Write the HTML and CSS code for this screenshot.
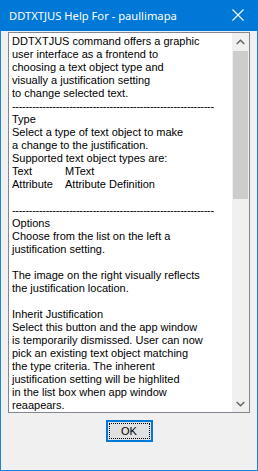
FILE: index.html
```html
<!DOCTYPE html>
<html>

<head>
    <title>DDTXTJUS Help For - paullimapa</title>
    <link rel="stylesheet" href="styles.css">
</head>

<body>
    <div class="window">
        <div class="titlebar">
            <span class="title">DDTXTJUS Help For - paullimapa</span>
            <span class="close">
                <svg width="12" height="12" viewBox="0 0 12 12">
                    <path d="M0.5 0.5 L11.5 11.5 M11.5 0.5 L0.5 11.5" stroke="#fff" stroke-width="1.1" fill="none"/>
                </svg>
            </span>
        </div>
        <div class="client">
            <div class="textbox">
                <div class="text">
                    <div>DDTXTJUS command offers a graphic</div>
                    <div>user interface as a frontend to</div>
                    <div>choosing a text object type and</div>
                    <div>visually a justification setting</div>
                    <div>to change selected text.</div>
                    <div class="dashes">------------------------------------------------------------</div>
                    <div>Type</div>
                    <div>Select a type of text object to make</div>
                    <div>a change to the justification.</div>
                    <div>Supported text object types are:</div>
                    <div><span class="col">Text</span>MText</div>
                    <div><span class="col">Attribute</span>Attribute Definition</div>
                    <div>&nbsp;</div>
                    <div class="dashes">------------------------------------------------------------</div>
                    <div>Options</div>
                    <div>Choose from the list on the left a</div>
                    <div>justification setting.</div>
                    <div>&nbsp;</div>
                    <div>The image on the right visually reflects</div>
                    <div>the justification location.</div>
                    <div>&nbsp;</div>
                    <div>Inherit Justification</div>
                    <div>Select this button and the app window</div>
                    <div>is temporarily dismissed. User can now</div>
                    <div>pick an existing text object matching</div>
                    <div>the type criteria. The inherent</div>
                    <div>justification setting will be highlited</div>
                    <div>in the list box when app window</div>
                    <div>reaapears.</div>
                </div>
                <div class="scrollbar">
                    <div class="arrow">
                        <svg width="9" height="6" viewBox="0 0 9 6">
                            <path d="M0.7 5 L4.5 1.2 L8.3 5" stroke="#606060" stroke-width="1.4" fill="none"/>
                        </svg>
                    </div>
                    <div class="track">
                        <div class="thumb"></div>
                    </div>
                    <div class="arrow">
                        <svg width="9" height="6" viewBox="0 0 9 6">
                            <path d="M0.7 1 L4.5 4.8 L8.3 1" stroke="#606060" stroke-width="1.4" fill="none"/>
                        </svg>
                    </div>
                </div>
            </div>
            <div class="actions">
                <button type="button" class="ok"><span class="focus">OK</span></button>
            </div>
        </div>
    </div>
</body>

</html>
```

FILE: styles.css
```css
body{
    margin: 0;
}

.window{
    width: 258px;
    height: 471px;
    box-sizing: border-box;
    border: 1px solid #1883d7;
    border-top: none;
    display: flex;
    flex-direction: column;
    background-color: #f0f0f0;
}

.titlebar{
    height: 31px;
    margin: 0 -1px;
    background-color: #0078d7;
    display: flex;
    align-items: center;
    padding: 0 0 1px 9px;
    box-sizing: border-box;
}

.title{
    flex: 1;
    color: #fff;
    font-family: "Noto Sans", sans-serif;
    font-size: 11.2px;
    white-space: nowrap;
}

.close{
    width: 12px;
    height: 12px;
    margin-right: 14px;
    display: flex;
}

.client{
    flex: 1;
    padding: 1px 7px 0 7px;
    display: flex;
    flex-direction: column;
}

.textbox{
    height: 381px;
    box-sizing: border-box;
    border: 1px solid #828790;
    background-color: #fff;
    display: flex;
}

.text{
    flex: 1;
    overflow: hidden;
    padding: 2px 0 0 3px;
    font-family: "Liberation Sans", Arial, sans-serif;
    font-size: 11px;
    line-height: 13px;
    color: #000;
    white-space: nowrap;
}

.col{
    display: inline-block;
    width: 53px;
}

.dashes{
    letter-spacing: -0.3px;
}

.scrollbar{
    width: 17px;
    background-color: #f0f0f0;
    display: flex;
    flex-direction: column;
}

.arrow{
    height: 17px;
    display: flex;
    align-items: center;
    justify-content: center;
}

.track{
    flex: 1;
    padding-top: 1px;
}

.thumb{
    height: 148px;
    margin: 0 1px;
    background-color: #cdcdcd;
}

.actions{
    display: flex;
    justify-content: center;
    padding-top: 7px;
}

.ok{
    width: 47px;
    height: 22px;
    padding: 1px;
    border: 2px solid #0078d7;
    background-color: #e1e1e1;
    font-family: "Liberation Sans", Arial, sans-serif;
    font-size: 11px;
    color: #000;
    display: flex;
}

.focus{
    flex: 1;
    border: 1px dotted #000;
    display: flex;
    align-items: center;
    justify-content: center;
}
```
